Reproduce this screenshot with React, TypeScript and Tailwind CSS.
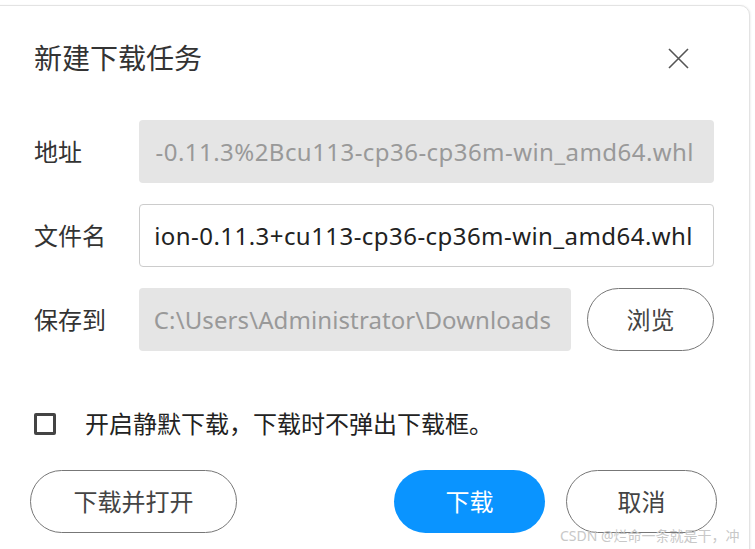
import React from "react";

const font = { fontFamily: '"Noto Sans", "Noto Sans CJK SC", sans-serif' };

function Field({
  value,
  disabled,
  className = "",
  tracking = "tracking-[0.45px]",
}: {
  value: string;
  disabled?: boolean;
  className?: string;
  tracking?: string;
}) {
  return (
    <div
      className={
        "flex h-[63px] min-w-0 items-center justify-end rounded-[4px] pl-[14px] pr-[20px] " +
        (disabled ? "bg-[#e5e5e5] text-[#999]" : "border border-[#ccc] bg-white text-[#222]") +
        " " +
        className
      }
    >
      <span className={"whitespace-nowrap text-[24px] leading-[30px] " + tracking}>{value}</span>
    </div>
  );
}

export default function App() {
  return (
    <div className="relative h-[549px] w-[755px] overflow-hidden bg-white" style={font}>
      <div className="-ml-[12px] mt-[5px] h-[600px] w-[762px] rounded-[10px] border border-[#e3e3e3] bg-white pl-[45px] pr-[35px] pt-[32px] shadow-[1px_0_2px_rgba(0,0,0,0.06)]">
        <div className="flex h-[40px] items-center justify-between">
          <h1 className="text-[28px] leading-none text-[#333]">新建下载任务</h1>
          <button className="mr-[25px] text-[#555]">
            <svg width="21" height="21" viewBox="0 0 21 21" fill="none" stroke="currentColor" strokeWidth="1.6">
              <path d="M1 1L20 20M20 1L1 20" />
            </svg>
          </button>
        </div>

        <div className="mt-[42px] flex flex-col gap-[21px]">
          <div className="flex items-center">
            <span className="w-[105px] shrink-0 text-[24px] text-[#333]">地址</span>
            <Field className="flex-1" disabled value="-0.11.3%2Bcu113-cp36-cp36m-win_amd64.whl" />
          </div>
          <div className="flex items-center">
            <span className="w-[105px] shrink-0 text-[24px] text-[#333]">文件名</span>
            <Field className="flex-1" value="ion-0.11.3+cu113-cp36-cp36m-win_amd64.whl" />
          </div>
          <div className="flex items-center">
            <span className="w-[105px] shrink-0 text-[24px] text-[#333]">保存到</span>
            <Field
              className="w-[432px] shrink-0 pl-[12px]"
              tracking="tracking-[0.1px]"
              disabled
              value="C:\Users\Administrator\Downloads"
            />
            <button className="ml-[16px] h-[63px] flex-1 rounded-full border border-[#777] text-[24px] text-[#444]">
              浏览
            </button>
          </div>
        </div>

        <label className="mt-[58px] flex h-[30px] items-center">
          <span className="h-[22px] w-[22px] rounded-[2px] border-[3px] border-[#444]" />
          <span className="ml-[29px] text-[24px] leading-none text-[#222]">开启静默下载，下载时不弹出下载框。</span>
        </label>

        <div className="-ml-[4px] -mr-[3px] mt-[31px] flex items-center">
          <button className="h-[63px] w-[207px] rounded-full border border-[#777] text-[24px] text-[#444]">
            下载并打开
          </button>
          <div className="flex-1" />
          <button className="h-[63px] w-[151px] rounded-full bg-[#0a94ff] text-[24px] text-white">下载</button>
          <button className="ml-[21px] h-[63px] w-[151px] rounded-full border border-[#777] text-[24px] text-[#444]">
            取消
          </button>
        </div>
      </div>

      <div className="absolute left-[560px] top-[526px] whitespace-nowrap text-[14px] leading-[20px] text-[#c8c8c8]">
        CSDN @烂命一条就是干，冲
      </div>
    </div>
  );
}
